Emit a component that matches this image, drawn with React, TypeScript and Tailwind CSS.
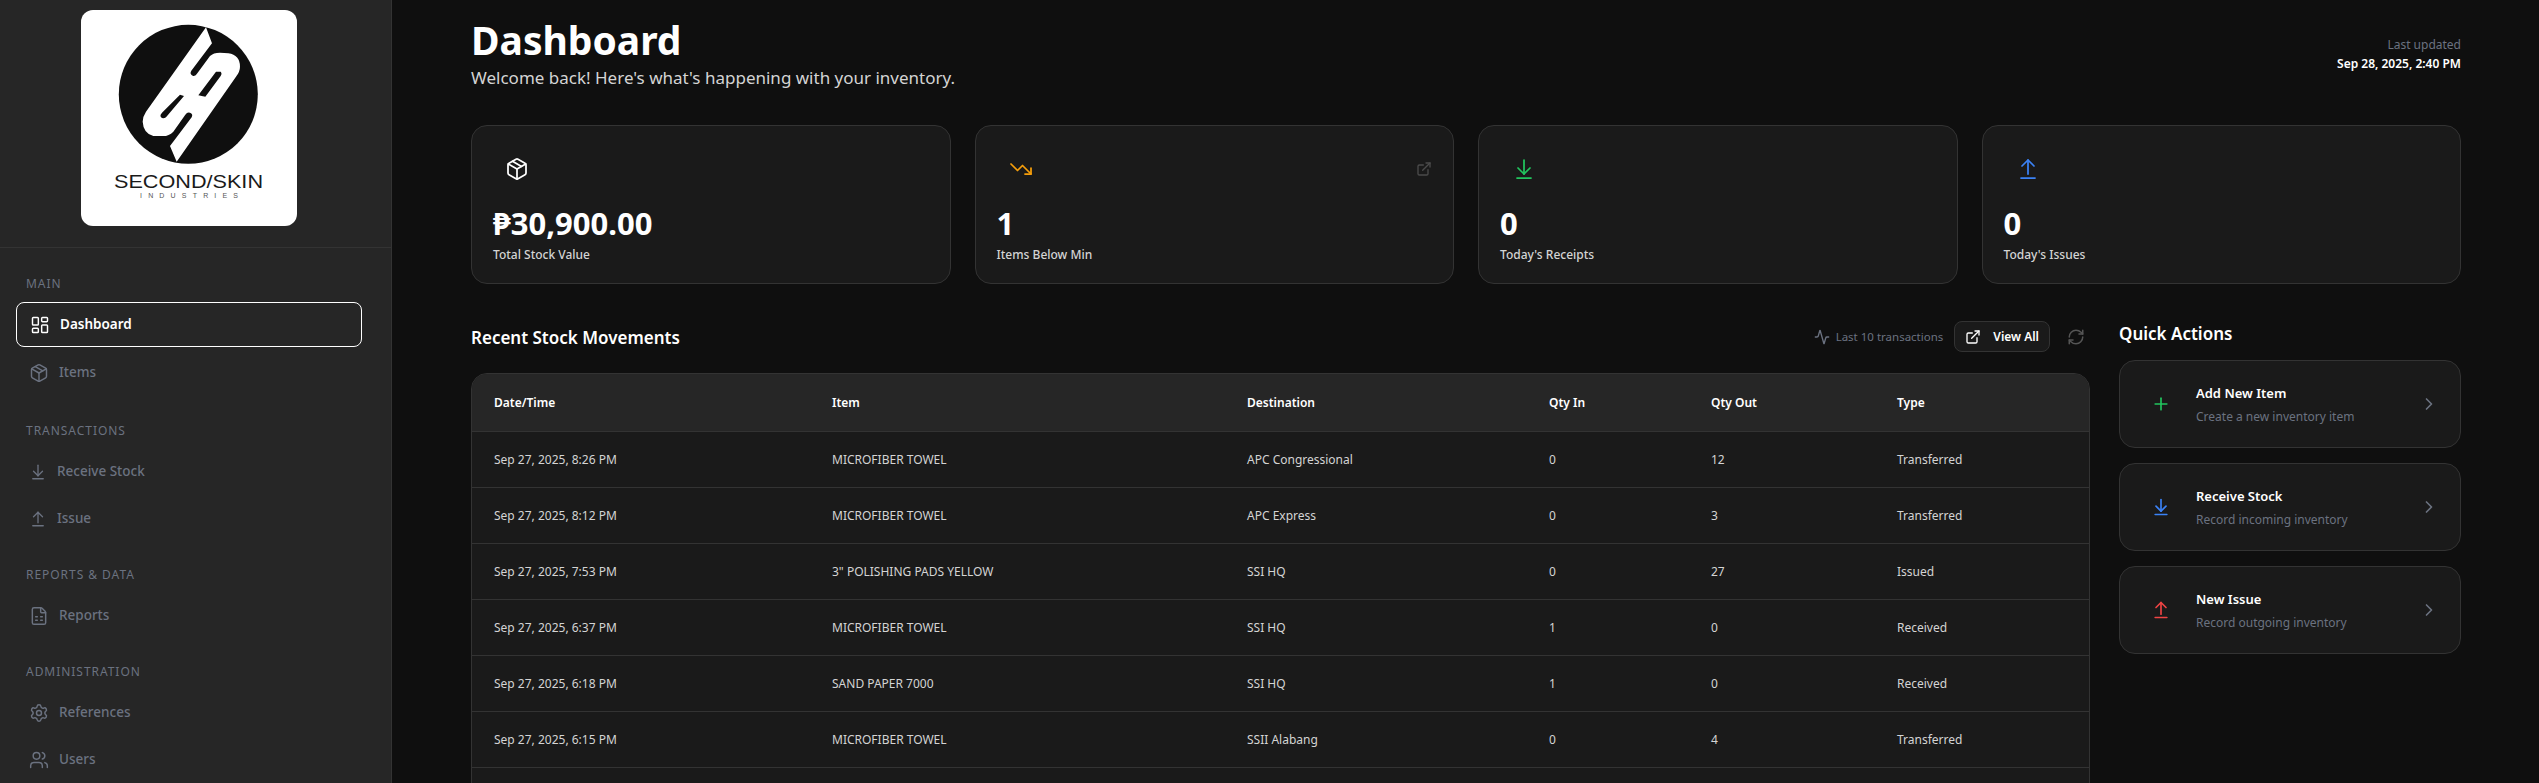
import React from 'react';
import {
  Activity,
  ArrowDownToLine,
  ArrowUpFromLine,
  ChevronRight,
  ExternalLink,
  FileSpreadsheet,
  LayoutDashboard,
  Package,
  Plus,
  RefreshCw,
  Settings,
  TrendingDown,
  Users,
} from 'lucide-react';

const movements = [
  { date: 'Sep 27, 2025, 8:26 PM', item: 'MICROFIBER TOWEL', destination: 'APC Congressional', qtyIn: 0, qtyOut: 12, type: 'Transferred' },
  { date: 'Sep 27, 2025, 8:12 PM', item: 'MICROFIBER TOWEL', destination: 'APC Express', qtyIn: 0, qtyOut: 3, type: 'Transferred' },
  { date: 'Sep 27, 2025, 7:53 PM', item: '3" POLISHING PADS YELLOW', destination: 'SSI HQ', qtyIn: 0, qtyOut: 27, type: 'Issued' },
  { date: 'Sep 27, 2025, 6:37 PM', item: 'MICROFIBER TOWEL', destination: 'SSI HQ', qtyIn: 1, qtyOut: 0, type: 'Received' },
  { date: 'Sep 27, 2025, 6:18 PM', item: 'SAND PAPER 7000', destination: 'SSI HQ', qtyIn: 1, qtyOut: 0, type: 'Received' },
  { date: 'Sep 27, 2025, 6:15 PM', item: 'MICROFIBER TOWEL', destination: 'SSII Alabang', qtyIn: 0, qtyOut: 4, type: 'Transferred' },
];

const Logo = () => (
  <svg viewBox="0 0 216 216" className="h-full w-full">
    <circle cx="107.3" cy="84.3" r="69.5" fill="#0f0f0f" />
    <g transform="translate(49 10) scale(0.3333)">
      <path
        fill="#fff"
        fillRule="evenodd"
        d="M228 22 L246 70 L184 152 Q178 162 188 167 Q196 170 202 160 L240 108 Q250 98 270 98 L295 100 Q330 105 330 140 Q330 155 318 170 L140 425 L120 378 L185 292 Q190 282 180 278 Q172 275 166 284 L130 335 Q115 350 95 348 L70 348 Q40 340 38 305 Q38 290 48 275 Z M258 155 L272 155 Q277 160 272 168 L226 230 L205 226 Z M150 224 L162 228 L108 292 Q98 298 92 290 Q90 284 96 278 Z"
      />
    </g>
    <text x="33" y="177.5" textLength="149" lengthAdjust="spacingAndGlyphs" fontFamily="Liberation Sans, sans-serif" fontSize="18.5" fill="#1a1a1a">
      SECOND/SKIN
    </text>
    <text x="59" y="188" textLength="98" fontFamily="Liberation Sans, sans-serif" fontSize="7" fill="#555">
      INDUSTRIES
    </text>
  </svg>
);

const NavItem = ({ icon, label, active }: { icon: React.ReactNode; label: string; active?: boolean }) => (
  <div
    className={`flex h-[45px] items-center gap-[10px] rounded-lg pl-[13px] text-[13.5px] ${
      active ? 'border-[1.5px] border-white font-semibold text-white' : 'font-medium text-[#6b7280]'
    }`}
  >
    {icon}
    <span>{label}</span>
  </div>
);

const SectionLabel = ({ children }: { children: React.ReactNode }) => (
  <div className="mb-[10px] h-4 pl-[10px] text-[12px] leading-4 tracking-[0.08em] text-[#6b7280] uppercase">{children}</div>
);

const Sidebar = () => (
  <aside className="flex h-full w-[392px] shrink-0 flex-col border-r border-[#333] bg-[#262626]">
    <div className="flex justify-center border-b border-[#333] pt-[10px] pr-[13px] pb-[21px]">
      <div className="h-[216px] w-[216px] overflow-hidden rounded-xl bg-white">
        <Logo />
      </div>
    </div>
    <nav className="flex flex-col gap-[26px] pt-[28px] pr-[29px] pl-4">
      <div className="pb-[2px]">
        <SectionLabel>Main</SectionLabel>
        <div className="flex flex-col gap-[3px]">
          <NavItem active icon={<LayoutDashboard size={20} strokeWidth={1.75} />} label="Dashboard" />
          <NavItem icon={<Package size={20} strokeWidth={1.75} />} label="Items" />
        </div>
      </div>
      <div>
        <SectionLabel>Transactions</SectionLabel>
        <div className="flex flex-col gap-[2px]">
          <NavItem icon={<ArrowDownToLine size={18} strokeWidth={1.75} />} label="Receive Stock" />
          <NavItem icon={<ArrowUpFromLine size={18} strokeWidth={1.75} />} label="Issue" />
        </div>
      </div>
      <div>
        <SectionLabel>Reports &amp; Data</SectionLabel>
        <NavItem icon={<FileSpreadsheet size={20} strokeWidth={1.75} />} label="Reports" />
      </div>
      <div>
        <SectionLabel>Administration</SectionLabel>
        <div className="flex flex-col gap-[2px]">
          <NavItem icon={<Settings size={20} strokeWidth={1.75} />} label="References" />
          <NavItem icon={<Users size={20} strokeWidth={1.75} />} label="Users" />
        </div>
      </div>
    </nav>
  </aside>
);

const StatCard = ({ icon, value, label, link }: { icon: React.ReactNode; value: string; label: string; link?: boolean }) => (
  <div className="h-[159px] rounded-2xl border border-[#333] bg-[#1a1a1a] px-[21px] pt-[19px]">
    <div className="mb-[10px] flex h-12 items-center justify-between">
      <div className="flex h-12 w-12 items-center justify-center">{icon}</div>
      {link && <ExternalLink size={16} className="text-[#4b4b4b]" />}
    </div>
    <div className="text-[31px] leading-10 font-bold text-white">{value}</div>
    <div className="mt-[2px] text-[12px] leading-5 font-medium text-[#d4d4d4]">{label}</div>
  </div>
);

const MovementsTable = () => (
  <div className="overflow-hidden rounded-t-2xl border border-[#333] bg-[#1a1a1a]">
    <table className="w-full table-fixed border-collapse text-left text-[12px]">
      <thead>
        <tr className="h-[57px] border-b border-[#333] bg-[#262626] font-semibold text-white [&>th]:pt-[2px]">
          <th className="w-[360px] pl-[22px] font-semibold">Date/Time</th>
          <th className="w-[415px] font-semibold">Item</th>
          <th className="w-[302px] font-semibold">Destination</th>
          <th className="w-[162px] font-semibold">Qty In</th>
          <th className="w-[186px] font-semibold">Qty Out</th>
          <th className="font-semibold">Type</th>
        </tr>
      </thead>
      <tbody className="text-[#d4d4d4]">
        {movements.map((row, i) => (
          <tr key={i} className="h-14 border-b border-[#333] [&>td]:pt-[2px]">
            <td className="pl-[22px]">{row.date}</td>
            <td>{row.item}</td>
            <td>{row.destination}</td>
            <td>{row.qtyIn}</td>
            <td>{row.qtyOut}</td>
            <td>{row.type}</td>
          </tr>
        ))}
        <tr className="h-14">
          <td colSpan={6} />
        </tr>
      </tbody>
    </table>
  </div>
);

const QuickAction = ({ icon, title, desc }: { icon: React.ReactNode; title: string; desc: string }) => (
  <div className="flex h-[88px] items-center gap-[25px] rounded-2xl border border-[#333] bg-[#1a1a1a] pr-[21px] pl-[31px]">
    {icon}
    <div className="min-w-0 flex-1">
      <div className="text-[13px] leading-5 font-semibold text-white">{title}</div>
      <div className="mt-[6px] text-[12px] leading-4 text-[#6b7280]">{desc}</div>
    </div>
    <ChevronRight size={20} className="text-[#6b7280]" />
  </div>
);

export default function App() {
  return (
    <div className="flex h-screen w-full overflow-hidden bg-[#0f0f0f] font-['Noto_Sans',sans-serif]">
      <Sidebar />
      <main className="min-w-0 flex-1 overflow-hidden pt-4 pr-[78px] pl-[79px]">
        {/* Header */}
        <div className="mb-[33px] flex items-center justify-between">
          <div>
            <h1 className="text-[39px] leading-[48px] font-bold text-white">Dashboard</h1>
            <p className="text-[17px] leading-7 text-[#d4d4d4]">Welcome back! Here's what's happening with your inventory.</p>
          </div>
          <div className="text-right text-[12px]">
            <div className="leading-[19px] text-[#6b7280]">Last updated</div>
            <div className="leading-[19px] font-semibold text-white">Sep 28, 2025, 2:40 PM</div>
          </div>
        </div>

        {/* Stats */}
        <div className="mb-[37px] grid grid-cols-4 gap-6">
          <StatCard icon={<Package size={24} strokeWidth={1.75} className="text-white" />} value="₱30,900.00" label="Total Stock Value" />
          <StatCard link icon={<TrendingDown size={24} strokeWidth={1.75} className="text-[#f59e0b]" />} value="1" label="Items Below Min" />
          <StatCard icon={<ArrowDownToLine size={24} strokeWidth={1.75} className="text-[#22c55e]" />} value="0" label="Today's Receipts" />
          <StatCard icon={<ArrowUpFromLine size={24} strokeWidth={1.75} className="text-[#3b82f6]" />} value="0" label="Today's Issues" />
        </div>

        <div className="flex gap-[29px]">
          {/* Recent movements */}
          <div className="min-w-0 flex-1">
            <div className="mb-[21px] flex h-[31px] items-center justify-between">
              <h2 className="pt-[2px] text-[17px] font-semibold text-white">Recent Stock Movements</h2>
              <div className="flex items-center">
                <Activity size={16} className="mr-[6px] text-[#6b7280]" />
                <span className="mr-[11px] text-[11.5px] text-[#6b7280]">Last 10 transactions</span>
                <button className="flex h-[31px] items-center gap-3 rounded-lg border border-[#333] bg-[#1a1a1a] px-[10px] text-[12px] font-semibold text-white">
                  <ExternalLink size={16} />
                  View All
                </button>
                <RefreshCw size={18} className="mr-[5px] ml-[17px] text-[#555]" />
              </div>
            </div>
            <MovementsTable />
          </div>

          {/* Quick actions */}
          <div className="w-[342px] shrink-0">
            <h2 className="mb-[13px] text-[17px] leading-[26px] font-semibold text-white">Quick Actions</h2>
            <div className="flex flex-col gap-[15px]">
              <QuickAction icon={<Plus size={20} className="text-[#22c55e]" />} title="Add New Item" desc="Create a new inventory item" />
              <QuickAction icon={<ArrowDownToLine size={20} className="text-[#3b82f6]" />} title="Receive Stock" desc="Record incoming inventory" />
              <QuickAction icon={<ArrowUpFromLine size={20} className="text-[#ef4444]" />} title="New Issue" desc="Record outgoing inventory" />
            </div>
          </div>
        </div>
      </main>
    </div>
  );
}
